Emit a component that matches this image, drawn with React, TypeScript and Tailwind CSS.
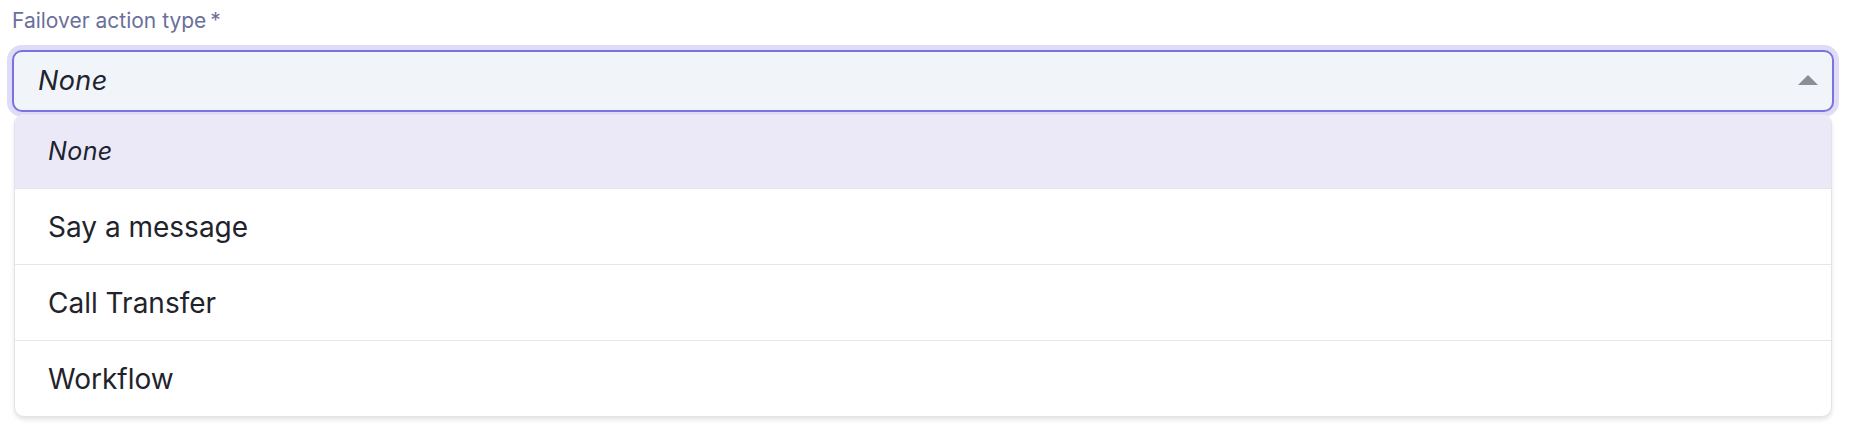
import React from 'react';

const options = ['None', 'Say a message', 'Call Transfer', 'Workflow'];

export default function App() {
  const selected = 'None';

  return (
    <div className="w-[1855px] h-[432px] bg-white pl-[12px] pt-[7px] font-['Inter','Liberation_Sans',sans-serif]">
      <label className="block text-[21px] leading-[28px] text-[#6b6f9b]">
        Failover action type<span className="ml-[4px]">*</span>
      </label>

      <div className="relative mt-[15px] w-[1822px]">
        {/* trigger */}
        <div className="h-[62px] rounded-[10px] border-2 border-[#7b72e2] bg-[#f1f4f8] ring-[5px] ring-[#dfdcf8] flex items-center justify-between pl-[24px] pr-[14px]">
          <span className="text-[27px] tracking-[0.4px] italic text-[#1d2330]">{selected}</span>
          <svg width="20" height="10" viewBox="0 0 20 10" className="mt-[-2px]">
            <path d="M10 0 L20 10 L0 10 Z" fill="#8b8e98" />
          </svg>
        </div>

        {/* menu */}
        <div className="mx-[2px] mt-[2px] rounded-[10px] border border-[#e3e4ea] bg-white shadow-[0_3px_4px_rgba(0,0,0,0.10)] overflow-hidden">
          {options.map((o, i) => (
            <div
              key={o}
              className={
                i === 0
                  ? 'h-[73px] flex items-center pl-[33px] text-[25px] tracking-[0.4px] italic text-[#1d2330] bg-[#ebe9f8]'
                  : 'h-[76px] flex items-center pl-[33px] text-[28px] text-[#1f232b] border-t border-[#e5e6ec]'
              }
            >
              {o}
            </div>
          ))}
        </div>
      </div>
    </div>
  );
}
